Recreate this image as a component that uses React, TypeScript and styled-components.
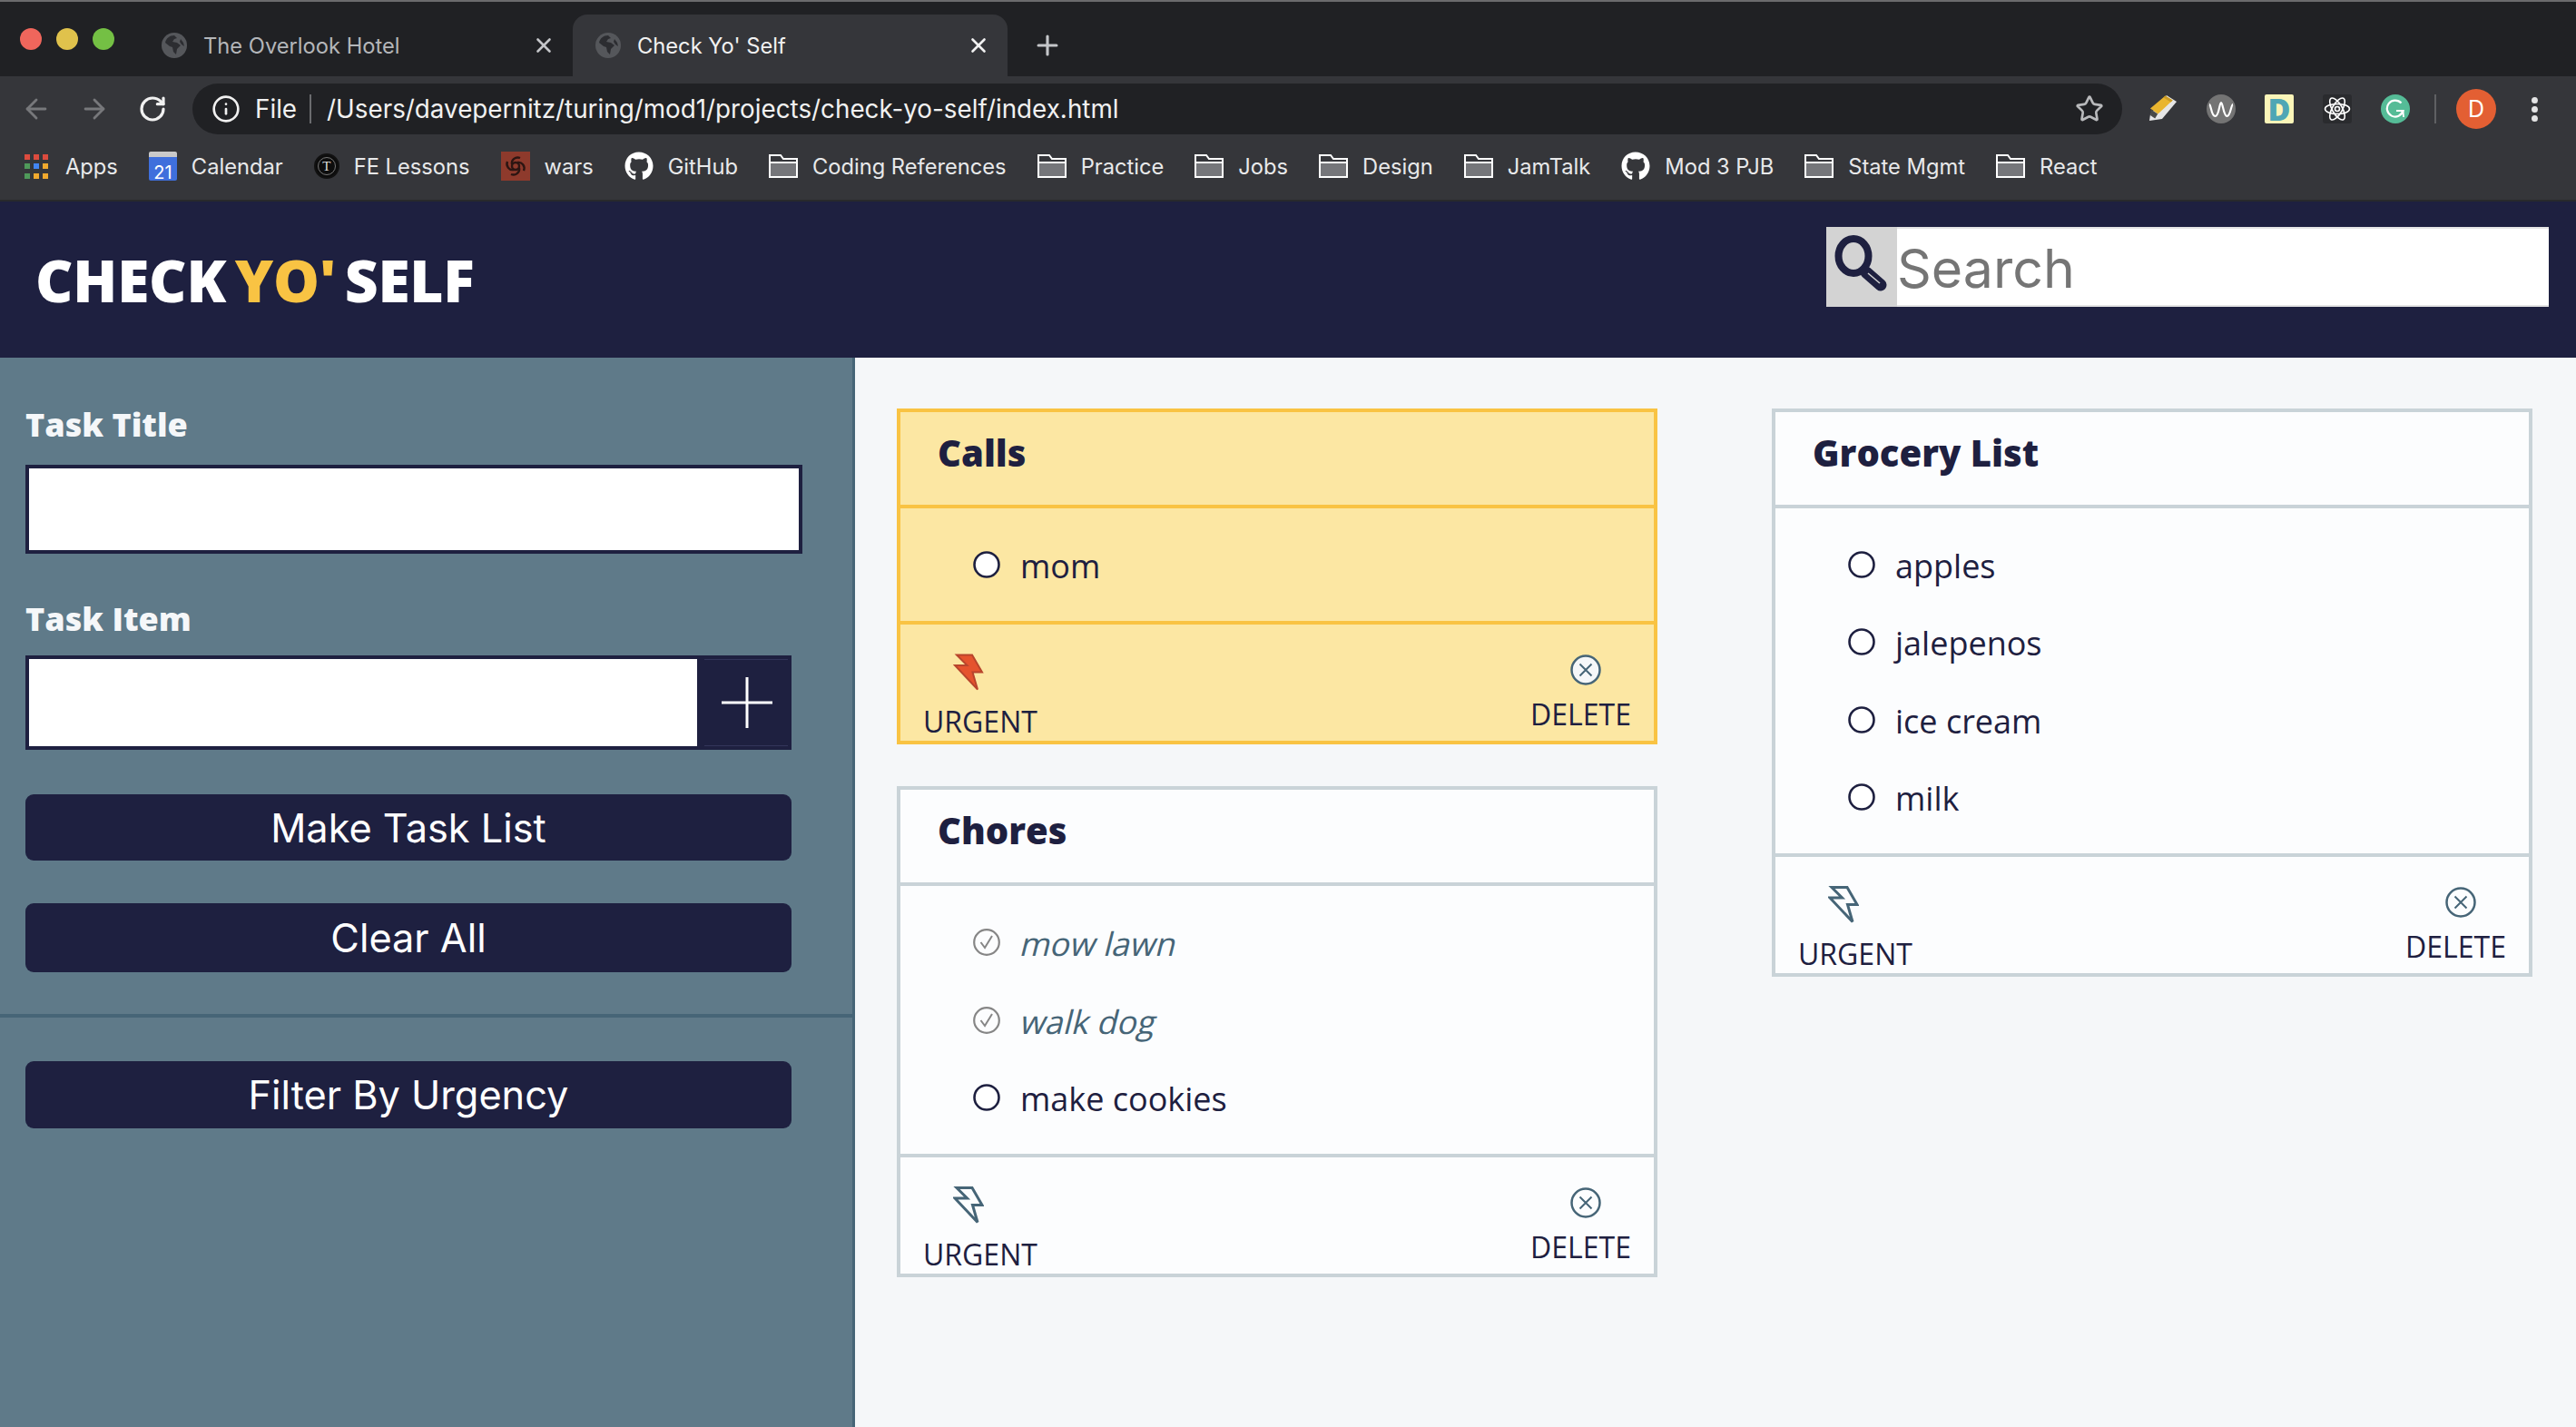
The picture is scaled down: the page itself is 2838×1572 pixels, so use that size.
import styled, { createGlobalStyle } from 'styled-components'
import { ArrowLeft, ArrowRight, Info, Plus, RotateCw, Star, X } from 'lucide-react'
import { FaGithub } from 'react-icons/fa'

const navy = '#1e2040'
const slate = '#466577'
const amber = '#f9c343'

type Bookmark = { label: string; icon: 'apps' | 'calendar' | 'turing' | 'wars' | 'github' | 'folder' }

const bookmarks: Bookmark[] = [
  { label: 'Apps', icon: 'apps' },
  { label: 'Calendar', icon: 'calendar' },
  { label: 'FE Lessons', icon: 'turing' },
  { label: 'wars', icon: 'wars' },
  { label: 'GitHub', icon: 'github' },
  { label: 'Coding References', icon: 'folder' },
  { label: 'Practice', icon: 'folder' },
  { label: 'Jobs', icon: 'folder' },
  { label: 'Design', icon: 'folder' },
  { label: 'JamTalk', icon: 'folder' },
  { label: 'Mod 3 PJB', icon: 'github' },
  { label: 'State Mgmt', icon: 'folder' },
  { label: 'React', icon: 'folder' },
]

type Todo = { text: string; done?: boolean }
type TaskList = { title: string; urgent?: boolean; items: Todo[] }

const leftLists: TaskList[] = [
  { title: 'Calls', urgent: true, items: [{ text: 'mom' }] },
  {
    title: 'Chores',
    items: [{ text: 'mow lawn', done: true }, { text: 'walk dog', done: true }, { text: 'make cookies' }],
  },
]

const rightLists: TaskList[] = [
  {
    title: 'Grocery List',
    items: [{ text: 'apples' }, { text: 'jalepenos' }, { text: 'ice cream' }, { text: 'milk' }],
  },
]

function Globe() {
  return (
    <svg width="28" height="28" viewBox="0 0 28 28">
      <circle cx="14" cy="14" r="14" fill="#55575b" />
      <path d="M14 3c-5 0-9 3-10 8l5 4 3 1 1 5 3 3 1-6 4-4-4-3-5-1 2-3 3-1z" fill="#2c2d31" />
      <path d="M21 7l3 4 1 4-3-2-2-3z" fill="#2c2d31" />
    </svg>
  )
}

function AppsIcon() {
  const colors = ['#dc4b3e', '#dc4b3e', '#dc4b3e', '#4f9a5a', '#4285f4', '#f0a92e', '#4f9a5a', '#f0a92e', '#f0a92e']
  return (
    <AppsGrid>
      {colors.map((c, i) => (
        <AppsDot key={i} $color={c} />
      ))}
    </AppsGrid>
  )
}

function Folder() {
  return (
    <svg width="32" height="26" viewBox="0 0 32 26">
      <path d="M1 1h12l3 4h15v20H1z" fill="#35363a" stroke="#fff" strokeWidth="2" />
      <rect x="2" y="9" width="28" height="15" fill="#75767a" />
      <rect x="2" y="8" width="28" height="2" fill="#fff" />
    </svg>
  )
}

function WarsIcon() {
  return (
    <WarsBox>
      <svg width="26" height="26" viewBox="0 0 26 26" fill="none" stroke="#2c1512" strokeWidth="2.4">
        <circle cx="13" cy="13" r="4" />
        <path d="M9 11C8 6 13 2 18 4M15 9c5-1 9 4 7 9M17 15c1 5-4 9-9 7M11 17c-5 1-9-4-7-9" />
      </svg>
    </WarsBox>
  )
}

function BookmarkIcon({ icon }: { icon: Bookmark['icon'] }) {
  if (icon === 'apps') return <AppsIcon />
  if (icon === 'calendar') return <CalendarBox>21</CalendarBox>
  if (icon === 'turing') return <TuringBox>T</TuringBox>
  if (icon === 'wars') return <WarsIcon />
  if (icon === 'github') return <FaGithub size={32} color="#fff" />
  return <Folder />
}

function Highlighter() {
  return (
    <svg width="32" height="30" viewBox="0 0 32 30">
      <path d="M20 0l11 7-16 19-14 2 1-7z" fill="#e6e6e6" />
      <path d="M2 14.6L18.6.6l8 5L10.5 20.5z" fill="#e9b52f" />
      <path d="M2.7 15.6l7.5 5-3 5L2 22z" fill="#4a4a48" />
      <path d="M18.6.6l8 5-2 2-8-5z" fill="#c99a25" />
    </svg>
  )
}

function Wave() {
  return (
    <svg width="28" height="20" viewBox="0 0 28 20" fill="none" stroke="#fff" strokeWidth="2.2">
      <path d="M1 5c2 0 2 13 6.500 13S12 3 14 3s2.500 15 6.500 15S25 5 27 5" />
    </svg>
  )
}

function ReactGlyph() {
  return (
    <svg width="30" height="30" viewBox="0 0 30 30" fill="none" stroke="#fff" strokeWidth="1.6">
      <ellipse cx="15" cy="15" rx="13.500" ry="5.500" />
      <ellipse cx="15" cy="15" rx="13.500" ry="5.500" transform="rotate(60 15 15)" />
      <ellipse cx="15" cy="15" rx="13.500" ry="5.500" transform="rotate(120 15 15)" />
      <circle cx="15" cy="15" r="2.500" />
    </svg>
  )
}

function GrammarlyGlyph() {
  return (
    <svg width="22" height="22" viewBox="0 0 22 22" fill="none" stroke="#fff" strokeWidth="2.2">
      <path d="M17.500 4.500A9 9 0 1 0 19.500 13H12" />
      <path d="M19.500 13l.5 7M20 13.500l-4 4" strokeWidth="1.800" />
    </svg>
  )
}

function SearchGlyph() {
  return (
    <svg width="62" height="64" viewBox="0 0 62 64" fill="none">
      <ellipse cx="22" cy="24" rx="16.5" ry="19" stroke={navy} strokeWidth="8" />
      <path d="M36 42l16 14" stroke={navy} strokeWidth="13" strokeLinecap="round" />
      <path d="M38 43l13 11" stroke="#d3d3d3" strokeWidth="1.5" />
    </svg>
  )
}

function Bolt({ urgent }: { urgent?: boolean }) {
  return (
    <BoltSvg width="34" height="42" viewBox="0 0 34 42">
      <path
        d="M4 1.5H21L32 20.5H21.5L27 39.5L2 13H15.5Z"
        fill={urgent ? '#e5532d' : 'none'}
        stroke={urgent ? '#b8452c' : slate}
        strokeWidth={urgent ? 2 : 3}
      />
    </BoltSvg>
  )
}

function DeleteGlyph({ urgent }: { urgent?: boolean }) {
  return (
    <DeleteSvg width="34" height="34" viewBox="0 0 34 34" fill={urgent ? '#f5f7f9' : 'none'} stroke={slate}>
      <circle cx="17" cy="17" r="15.5" strokeWidth="2.5" />
      <path d="M10.5 10.5l13 13M23.5 10.5l-13 13" strokeWidth="2" />
    </DeleteSvg>
  )
}

function Radio({ done }: { done?: boolean }) {
  if (done) {
    return (
      <RadioSvg width="30" height="30" viewBox="0 0 30 30" fill="none" stroke="#868686">
        <circle cx="15" cy="15" r="13.8" strokeWidth="2.2" />
        <path d="M8.500 15l4.500 6 8-13" strokeWidth="2" />
      </RadioSvg>
    )
  }
  return (
    <RadioSvg width="30" height="30" viewBox="0 0 30 30" fill="#fff" stroke={navy}>
      <circle cx="15" cy="15" r="13.5" strokeWidth="2.6" />
    </RadioSvg>
  )
}

function ListCard({ list }: { list: TaskList }) {
  return (
    <Card $urgent={list.urgent}>
      <CardTitle>{list.title}</CardTitle>
      <CardBody $urgent={list.urgent}>
        {list.items.map((item) => (
          <Row key={item.text}>
            <Radio done={item.done} />
            <RowText $done={item.done}>{item.text}</RowText>
          </Row>
        ))}
      </CardBody>
      <CardFooter>
        <FooterAction>
          <Bolt urgent={list.urgent} />
          <ActionLabel>URGENT</ActionLabel>
        </FooterAction>
        <FooterAction>
          <DeleteGlyph urgent={list.urgent} />
          <ActionLabel>DELETE</ActionLabel>
        </FooterAction>
      </CardFooter>
    </Card>
  )
}

export default function App() {
  return (
    <>
      <GlobalStyle />
      <Window>
        <TabStrip>
          <Lights>
            <Light $color="#f0665c" />
            <Light $color="#e0c24c" />
            <Light $color="#74c044" />
          </Lights>
          <Tab>
            <Globe />
            <TabTitle>The Overlook Hotel</TabTitle>
            <X size={26} color="#c4c6c9" strokeWidth={2.4} />
          </Tab>
          <Tab $active>
            <Globe />
            <TabTitle $active>Check Yo' Self</TabTitle>
            <X size={26} color="#f1f1f1" strokeWidth={2.4} />
          </Tab>
          <NewTab>
            <Plus size={34} color="#c4c6c9" strokeWidth={2.2} />
          </NewTab>
        </TabStrip>

        <Toolbar>
          <NavButton>
            <ArrowLeft size={34} color="#77787b" strokeWidth={2} />
          </NavButton>
          <NavButton>
            <ArrowRight size={34} color="#77787b" strokeWidth={2} />
          </NavButton>
          <NavButton>
            <RotateCw size={32} color="#f1f1f1" strokeWidth={2.4} />
          </NavButton>
          <AddressBar>
            <Info size={32} color="#f1f1f1" strokeWidth={2} />
            <FileLabel>File</FileLabel>
            <AddressDivider />
            <Url>/Users/davepernitz/turing/mod1/projects/check-yo-self/index.html</Url>
            <Star size={32} color="#b9babc" strokeWidth={2} />
          </AddressBar>
          <Extensions>
            <ExtSlot>
              <Highlighter />
            </ExtSlot>
            <ExtSlot>
              <WaveBadge>
                <Wave />
              </WaveBadge>
            </ExtSlot>
            <ExtSlot>
              <DBadge>D</DBadge>
            </ExtSlot>
            <ExtSlot>
              <ReactBadge>
                <ReactGlyph />
              </ReactBadge>
            </ExtSlot>
            <ExtSlot>
              <GBadge>
                <GrammarlyGlyph />
              </GBadge>
            </ExtSlot>
            <ExtDivider />
            <Avatar>D</Avatar>
            <Kebab>
              <KebabDot />
              <KebabDot />
              <KebabDot />
            </Kebab>
          </Extensions>
        </Toolbar>

        <BookmarkBar>
          {bookmarks.map((b) => (
            <BookmarkItem key={b.label}>
              <BookmarkIcon icon={b.icon} />
              <BookmarkLabel>{b.label}</BookmarkLabel>
            </BookmarkItem>
          ))}
        </BookmarkBar>

        <Header>
          <Logo>
            CHECK <Accent>YO'</Accent> SELF
          </Logo>
          <SearchBox>
            <SearchButton>
              <SearchGlyph />
            </SearchButton>
            <SearchInput placeholder="Search" />
          </SearchBox>
        </Header>

        <Content>
          <Sidebar>
            <TaskForm>
              <FieldLabel>Task Title</FieldLabel>
              <TitleInput />
              <FieldLabel $spaced>Task Item</FieldLabel>
              <ItemRow>
                <ItemInput />
                <AddButton>
                  <svg width="56" height="56" viewBox="0 0 56 56" stroke="#fff" strokeWidth="3">
                    <path d="M28 0v56M0 28h56" />
                  </svg>
                </AddButton>
              </ItemRow>
              <ActionButton $height={73} $top={49}>
                Make Task List
              </ActionButton>
              <ActionButton $height={76} $top={47}>
                Clear All
              </ActionButton>
            </TaskForm>
            <FilterArea>
              <ActionButton $height={74} $top={0}>
                Filter By Urgency
              </ActionButton>
            </FilterArea>
          </Sidebar>
          <Board>
            <Column>
              {leftLists.map((list) => (
                <ListCard key={list.title} list={list} />
              ))}
            </Column>
            <Column>
              {rightLists.map((list) => (
                <ListCard key={list.title} list={list} />
              ))}
            </Column>
          </Board>
        </Content>
      </Window>
    </>
  )
}

const GlobalStyle = createGlobalStyle`
  * { box-sizing: border-box; }
  body { margin: 0; background: #f5f7f9; font-family: 'Open Sans', sans-serif; }
`

const Window = styled.div`
  width: 2838px;
  height: 1572px;
  overflow: hidden;
  display: flex;
  flex-direction: column;
`

const TabStrip = styled.div`
  height: 84px;
  flex: none;
  display: flex;
  align-items: flex-end;
  background: #202124;
  border-top: 2px solid #6b6b6d;
`

const Lights = styled.div`
  width: 152px;
  height: 82px;
  padding: 29px 0 0 22px;
  display: flex;
  gap: 16px;
`

const Light = styled.span<{ $color: string }>`
  width: 24px;
  height: 24px;
  border-radius: 50%;
  background: ${(p) => p.$color};
`

const Tab = styled.div<{ $active?: boolean }>`
  width: 479px;
  height: 68px;
  padding: 0 19px 0 ${(p) => (p.$active ? 25 : 26)}px;
  display: flex;
  align-items: center;
  border-radius: 16px 16px 0 0;
  background: ${(p) => (p.$active ? '#35363a' : 'transparent')};
`

const TabTitle = styled.span<{ $active?: boolean }>`
  flex: 1;
  margin-left: 18px;
  font: 400 23.7px Inter, sans-serif;
  color: ${(p) => (p.$active ? '#f1f1f1' : '#b4b6b9')};
`

const NewTab = styled.div`
  height: 68px;
  margin-left: 27px;
  display: flex;
  align-items: center;
`

const Toolbar = styled.div`
  height: 72px;
  flex: none;
  padding-left: 8px;
  display: flex;
  align-items: center;
  background: #35363a;
`

const NavButton = styled.div`
  width: 64px;
  display: flex;
  justify-content: center;
`

const AddressBar = styled.div`
  width: 2126px;
  height: 56px;
  margin-left: 12px;
  padding: 0 20px 0 21px;
  display: flex;
  align-items: center;
  border-radius: 28px;
  background: #202124;
`

const FileLabel = styled.span`
  margin-left: 16px;
  font: 400 27.8px Inter, sans-serif;
  color: #f1f1f1;
`

const AddressDivider = styled.span`
  width: 2px;
  height: 32px;
  margin: 0 17px 0 14px;
  background: #6a6b6e;
`

const Url = styled.span`
  flex: 1;
  font: 400 27.8px Inter, sans-serif;
  color: #f1f1f1;
`

const Extensions = styled.div`
  flex: 1;
  margin-left: 13px;
  display: flex;
  align-items: center;
`

const ExtSlot = styled.div`
  width: 64px;
  display: flex;
  justify-content: center;
`

const WaveBadge = styled.div`
  width: 32px;
  height: 32px;
  border-radius: 50%;
  display: flex;
  align-items: center;
  justify-content: center;
  background: #747474;
`

const DBadge = styled.div`
  width: 32px;
  height: 32px;
  border-radius: 2px;
  display: flex;
  align-items: center;
  justify-content: center;
  background: #fbf5b8;
  color: #4fa6b5;
  font: 800 34px 'Open Sans', sans-serif;
`

const ReactBadge = styled.div`
  width: 32px;
  height: 32px;
  border-radius: 3px;
  display: flex;
  align-items: center;
  justify-content: center;
  background: #2a2b2e;
`

const GBadge = styled.div`
  width: 32px;
  height: 32px;
  border-radius: 50%;
  display: flex;
  align-items: center;
  justify-content: center;
  background: #55bc97;
`

const ExtDivider = styled.span`
  width: 2px;
  height: 32px;
  margin-left: 11px;
  background: #5f6063;
`

const Avatar = styled.div`
  width: 44px;
  height: 44px;
  margin-left: 22px;
  border-radius: 50%;
  display: flex;
  align-items: center;
  justify-content: center;
  background: #e35f33;
  color: #fff;
  font: 400 25px Inter, sans-serif;
`

const Kebab = styled.div`
  margin-left: 39px;
  display: flex;
  flex-direction: column;
  gap: 3px;
`

const KebabDot = styled.span`
  width: 7px;
  height: 7px;
  border-radius: 50%;
  background: #e4e4e5;
`

const BookmarkBar = styled.div`
  height: 66px;
  flex: none;
  padding: 0 0 10px 27px;
  display: flex;
  align-items: center;
  gap: 34px;
  background: #35363a;
  border-bottom: 2px solid #28292c;
`

const BookmarkItem = styled.div`
  display: flex;
  align-items: center;
  gap: 16px;
`

const BookmarkLabel = styled.span`
  font: 400 23.7px Inter, sans-serif;
  color: #e8e9ea;
`

const AppsGrid = styled.div`
  width: 26px;
  height: 27px;
  margin-right: 3px;
  display: grid;
  grid-template-columns: repeat(3, 6px);
  grid-template-rows: repeat(3, 6px);
  justify-content: space-between;
  align-content: space-between;
`

const AppsDot = styled.span<{ $color: string }>`
  background: ${(p) => p.$color};
`

const CalendarBox = styled.div`
  width: 31px;
  height: 32px;
  padding-top: 7px;
  border-top: 6px solid #c9c9c9;
  border-radius: 2px;
  background: #3f6fdc;
  color: #fff;
  text-align: center;
  font: 400 20px/20px Inter, sans-serif;
`

const TuringBox = styled.div`
  width: 28px;
  height: 28px;
  border-radius: 50%;
  border: 2px solid #111;
  outline: 1px solid #777;
  outline-offset: -5px;
  display: flex;
  align-items: center;
  justify-content: center;
  background: #0d0d0d;
  color: #ddd;
  font: 400 15px 'Liberation Serif', serif;
`

const WarsBox = styled.div`
  width: 32px;
  height: 32px;
  display: flex;
  align-items: center;
  justify-content: center;
  background: #8e3a2c;
`

const Header = styled.header`
  height: 172px;
  flex: none;
  padding: 0 30px 0 39px;
  display: flex;
  align-items: center;
  justify-content: space-between;
  background: ${navy};
`

const Logo = styled.h1`
  margin: 0;
  font: 800 64px 'Open Sans', sans-serif;
  letter-spacing: -0.2px;
  word-spacing: -7px;
  color: #fff;
`

const Accent = styled.span`
  color: ${amber};
`

const SearchBox = styled.div`
  width: 796px;
  height: 88px;
  margin-top: -28px;
  display: flex;
`

const SearchButton = styled.div`
  width: 78px;
  padding: 8px 0 0 8px;
  background: #d3d3d3;
`

const SearchInput = styled.input`
  flex: 1;
  min-width: 0;
  padding: 3px 0 0;
  border: 2px solid #e4e4e4;
  border-width: 2px 0;
  outline: none;
  background: #fff;
  font: 400 59px Inter, sans-serif;
  &::placeholder {
    color: #757575;
  }
`

const Content = styled.div`
  flex: 1;
  display: flex;
  min-height: 0;
`

const Sidebar = styled.aside`
  width: 942px;
  flex: none;
  background: #5f7a89;
  border-right: 3px solid ${slate};
`

const TaskForm = styled.div`
  padding: 49px 0 46px 28px;
  display: flex;
  flex-direction: column;
  border-bottom: 4px solid ${slate};
`

const FieldLabel = styled.label<{ $spaced?: boolean }>`
  margin-top: ${(p) => (p.$spaced ? 47 : 0)}px;
  font: 800 36px/50px 'Open Sans', sans-serif;
  color: #f5f7f9;
`

const TitleInput = styled.input`
  width: 856px;
  height: 98px;
  margin-top: 19px;
  border: 4px solid ${navy};
  outline: none;
  background: #fff;
`

const ItemRow = styled.div`
  width: 844px;
  height: 104px;
  margin-top: 15px;
  padding: 4px;
  display: flex;
  background: ${navy};
`

const ItemInput = styled.input`
  width: 736px;
  height: 96px;
  border: none;
  outline: none;
  background: #fff;
`

const AddButton = styled.div`
  width: 92px;
  margin-left: 8px;
  padding-left: 2px;
  display: flex;
  align-items: center;
  justify-content: center;
  border: 1px solid #33355a;
  border-width: 1px 0;
`

const ActionButton = styled.button<{ $height: number; $top: number }>`
  width: 844px;
  height: ${(p) => p.$height}px;
  margin-top: ${(p) => p.$top}px;
  border: none;
  border-radius: 9px;
  background: ${navy};
  color: #fff;
  font: 400 43.3px Inter, sans-serif;
  text-align: center;
`

const FilterArea = styled.div`
  padding: 48px 0 0 28px;
`

const Board = styled.main`
  flex: 1;
  padding: 56px 0 0 46px;
  display: grid;
  grid-template-columns: 838px 838px;
  column-gap: 126px;
  align-items: start;
  background: #f5f7f9;
`

const Column = styled.div`
  display: flex;
  flex-direction: column;
  gap: 46px;
`

const Card = styled.section<{ $urgent?: boolean }>`
  border: 4px solid ${(p) => (p.$urgent ? amber : '#c9d3d8')};
  background: ${(p) => (p.$urgent ? '#fce7a3' : '#fcfdfe')};
  color: ${navy};
`

const CardTitle = styled.h2`
  height: 102px;
  margin: 0;
  padding: 18px 0 0 41px;
  font: 800 40px/54px 'Open Sans', sans-serif;
`

const CardBody = styled.div<{ $urgent?: boolean }>`
  padding: 19.5px 0 19.5px 80px;
  border: solid ${(p) => (p.$urgent ? amber : '#c9d3d8')};
  border-width: 4px 0;
`

const Row = styled.div`
  height: 85.33px;
  display: flex;
  align-items: center;
  gap: 22px;
`

const RadioSvg = styled.svg`
  flex: none;
`

const RowText = styled.span<{ $done?: boolean }>`
  display: inline-block;
  padding-top: 3px;
  font-family: 'Open Sans', sans-serif;
  font-size: 36px;
  transform: ${(p) => (p.$done ? 'skewX(-14deg)' : 'none')};
  margin-left: ${(p) => (p.$done ? 2 : 0)}px;
  color: ${(p) => (p.$done ? slate : navy)};
`

const CardFooter = styled.div`
  height: 128px;
  padding: 32px 25px 0;
  display: flex;
  justify-content: space-between;
  align-items: flex-start;
`

const FooterAction = styled.div`
  display: flex;
  flex-direction: column;
  align-items: flex-start;
`

const BoltSvg = styled.svg`
  margin-left: 33px;
`

const DeleteSvg = styled.svg`
  margin: 1px 0 -1px 44px;
`

const ActionLabel = styled.span`
  margin-top: 11px;
  font: 400 32px/44px 'Open Sans', sans-serif;
`
